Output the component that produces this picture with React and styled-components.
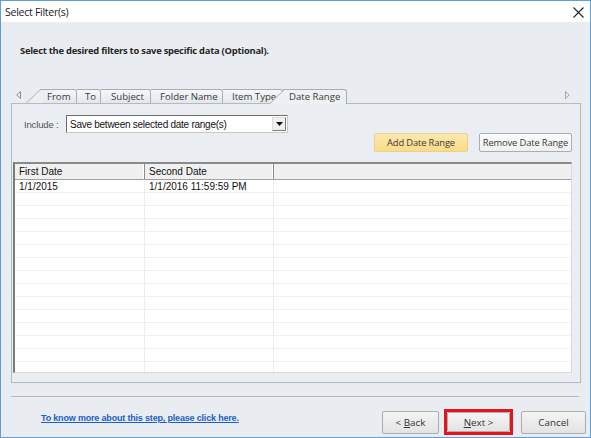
import React from "react";
import styled, { createGlobalStyle, css } from "styled-components";

const GlobalStyle = createGlobalStyle`
  html, body { margin: 0; padding: 0; background: #ffffff; }
  body { font-family: "Open Sans", "Noto Sans", sans-serif; }
  * { box-sizing: border-box; }
`;

const UI = `"Open Sans", "Noto Sans", sans-serif`;
const MS = `"Liberation Sans", Arial, sans-serif`;

const Window = styled.div`
  width: 591px;
  height: 438px;
  border: 1px solid #5d9fd8;
  display: flex;
  flex-direction: column;
  background: #e9edf1;
  overflow: hidden;
`;

const TitleBar = styled.div`
  height: 21px;
  flex: none;
  background: #ffffff;
  display: flex;
  align-items: center;
  justify-content: space-between;
  padding: 0 6px 0 4px;
`;

const Title = styled.div`
  font: 10.6px ${UI};
  color: #1b1b1b;
  letter-spacing: -0.3px;
`;

const CloseButton = styled.div`
  width: 12px;
  height: 12px;
  display: flex;
  align-items: center;
  justify-content: center;
  margin-top: 1px;
`;

const Body = styled.div`
  flex: 1;
  display: flex;
  flex-direction: column;
  padding: 22px 9px 0 10px;
`;

const Intro = styled.div`
  font: bold 9.4px ${UI};
  line-height: 14px;
  color: #262626;
  padding-left: 9px;
  letter-spacing: -0.24px;
`;

const TabStrip = styled.div`
  margin-top: 30px;
  height: 15px;
  display: flex;
  align-items: flex-end;
  position: relative;
  z-index: 2;
`;

const ScrollArrow = styled.div`
  width: 15px;
  height: 15px;
  display: flex;
  align-items: center;
  justify-content: center;
  padding-bottom: 2px;
  ${(p) => p.$right && css`margin-left: auto; margin-right: 6px;`}
`;

const Tabs = styled.div`
  display: flex;
  align-items: flex-end;
  margin-left: 14px;
`;

const Tab = styled.div`
  position: relative;
  width: ${(p) => p.$w}px;
  height: ${(p) => (p.$active ? 15 : 14)}px;
  margin-bottom: ${(p) => (p.$active ? -1 : 0)}px;
  border-top: 1px solid #a6adb6;
  border-right: 1px solid #a6adb6;
  border-top-right-radius: 3px;
  background: ${(p) => (p.$active ? "#eef1f4" : "linear-gradient(#f5f7f9, #e3e7eb)")};
  font: 9.6px ${UI};
  line-height: 13px;
  color: #3a3a3a;
  text-align: left;
  white-space: nowrap;
  padding-left: ${(p) => p.$pl}px;
  z-index: ${(p) => (p.$active ? 2 : 1)};
  ${(p) =>
    p.$slant &&
    css`
      &::before {
        content: "";
        position: absolute;
        top: 0;
        bottom: 0;
        left: -14px;
        width: 15px;
        border-left: 1px solid #a6adb6;
        background: ${p.$active ? "#eef1f4" : "#eceff2"};
        transform: skewX(-46deg);
        transform-origin: bottom left;
        z-index: -1;
      }
    `}
`;

const Panel = styled.div`
  height: 280px;
  border: 1px solid #b4bac2;
  background: #eaeef2;
  display: flex;
  flex-direction: column;
  padding: 11px 8px 9px 1px;
  position: relative;
  z-index: 1;
`;

const IncludeRow = styled.div`
  display: flex;
  align-items: center;
  padding-left: 11px;
  height: 18px;
`;

const Label = styled.span`
  font: 9.6px ${MS};
  color: #555;
  width: 42px;
  letter-spacing: -0.2px;
`;

const Select = styled.div`
  width: 222px;
  height: 18px;
  background: #ffffff;
  border: 1px solid #6e6e6e;
  border-right-color: #c8c8c8;
  border-bottom-color: #c8c8c8;
  display: flex;
  align-items: center;
  justify-content: space-between;
  padding: 0 1px 0 3px;
  font: 10px ${MS};
  letter-spacing: -0.26px;
  color: #111;
`;

const DropButton = styled.div`
  width: 14px;
  height: 14px;
  background: #f0f0f0;
  border: 1px solid #dcdcdc;
  border-right-color: #7a7a7a;
  border-bottom-color: #7a7a7a;
  display: flex;
  align-items: center;
  justify-content: center;
`;

const ActionRow = styled.div`
  display: flex;
  justify-content: flex-end;
  gap: 11px;
`;

const ActionButton = styled.div`
  width: ${(p) => p.$w}px;
  height: 19px;
  border-radius: 2px;
  display: flex;
  align-items: center;
  justify-content: center;
  font: 9.4px ${UI};
  letter-spacing: -0.15px;
  white-space: nowrap;
  color: #3b3b3b;
  ${(p) =>
    p.$hot
      ? css`
          background: linear-gradient(#fce9b0, #f9db88);
          border: 1px solid #ebd08a;
        `
      : css`
          background: linear-gradient(#fbfbfb, #eef0f2);
          border: 1px solid #a9aeb5;
        `}
`;

const Grid = styled.div`
  margin-top: 10px;
  flex: 1;
  background: #ffffff;
  border-top: 2px solid #8a8a8a;
  border-left: 2px solid #7a7a7a;
  border-right: 1px solid #d9d9d9;
  border-bottom: 1px solid #d9d9d9;
  display: flex;
  flex-direction: column;
  overflow: hidden;
`;

const cols = "130px 129px 1fr";

const HeaderRow = styled.div`
  display: grid;
  grid-template-columns: ${cols};
  height: 16px;
  flex: none;
  background: #f0f0f0;
  border-bottom: 1px solid #a0a0a0;
`;

const HeaderCell = styled.div`
  font: 10px ${MS};
  color: #111;
  line-height: 15px;
  padding-left: 4px;
  border-right: 1px solid #8c8c8c;
  box-shadow: inset -1px 0 0 #ffffff;
  &:last-child { border-right: none; box-shadow: none; }
`;

const DataRow = styled.div`
  display: grid;
  grid-template-columns: ${cols};
  height: 13px;
  flex: none;
  border-bottom: 1px solid #f0f0f0;
`;

const DataCell = styled.div`
  font: 10px ${MS};
  color: #111;
  line-height: 13px;
  padding-left: 4px;
  border-right: 1px solid #ececec;
  &:last-child { border-right: none; }
`;

const Separator = styled.div`
  margin-top: 13px;
  height: 1px;
  background: #b3b7bc;
  margin-right: 2px;
`;

const Footer = styled.div`
  display: flex;
  align-items: flex-start;
  justify-content: space-between;
  margin-top: 12px;
  margin-right: -5px;
`;

const HelpLink = styled.a`
  font: bold 9px ${MS};
  line-height: 12px;
  color: #1a5fc7;
  text-decoration: underline;
  margin-left: 30px;
  margin-top: 3px;
  letter-spacing: -0.18px;
  cursor: pointer;
`;

const Buttons = styled.div`
  display: flex;
  align-items: center;
`;

const Highlight = styled.div`
  border: 3px solid #e4141c;
  margin: 0 8px 0 5px;
  padding: 0;
  display: flex;
`;

const DialogButton = styled.div`
  width: ${(p) => p.$w}px;
  height: ${(p) => p.$h || 23}px;
  border: 1px solid #acacac;
  border-radius: 2px;
  background: linear-gradient(#f4f4f4, #e3e3e3);
  display: flex;
  align-items: center;
  justify-content: center;
  font: 9.8px ${UI};
  color: #333;
  u { text-decoration: underline; }
`;

const tabs = [
  { label: "From", w: 37, pl: 7 },
  { label: "To", w: 24, pl: 8 },
  { label: "Subject", w: 50, pl: 10 },
  { label: "Folder Name", w: 72, pl: 9 },
  { label: "Item Type", w: 60, pl: 9 },
  { label: "Date Range", w: 64, pl: 6, active: true },
];

const rows = [["1/1/2015", "1/1/2016 11:59:59 PM", ""]];
const EMPTY_ROWS = 14;

export default function App() {
  return (
    <>
      <GlobalStyle />
      <Window>
        <TitleBar>
          <Title>Select Filter(s)</Title>
          <CloseButton>
            <svg width="11" height="11" viewBox="0 0 11 11">
              <path d="M0.5 0.5 L10.5 10.5 M10.5 0.5 L0.5 10.5" stroke="#222" strokeWidth="1.1" />
            </svg>
          </CloseButton>
        </TitleBar>
        <Body>
          <Intro>Select the desired filters to save specific data (Optional).</Intro>
          <TabStrip>
            <ScrollArrow>
              <svg width="5" height="8" viewBox="0 0 5 8">
                <path d="M4.5 0.5 L0.7 4 L4.5 7.5 Z" fill="none" stroke="#8a8f96" strokeWidth="1" />
              </svg>
            </ScrollArrow>
            <Tabs>
              {tabs.map((t, i) => (
                <Tab key={t.label} $w={t.w} $pl={t.pl} $active={t.active} $slant={i === 0 || t.active}>
                  {t.label}
                </Tab>
              ))}
            </Tabs>
            <ScrollArrow $right>
              <svg width="5" height="8" viewBox="0 0 5 8">
                <path d="M0.5 0.5 L4.3 4 L0.5 7.5 Z" fill="none" stroke="#a0a5ab" strokeWidth="1" />
              </svg>
            </ScrollArrow>
          </TabStrip>
          <Panel>
            <IncludeRow>
              <Label>Include :</Label>
              <Select>
                <span>Save between selected date range(s)</span>
                <DropButton>
                  <svg width="7" height="4" viewBox="0 0 7 4">
                    <path d="M0 0 L7 0 L3.5 4 Z" fill="#111" />
                  </svg>
                </DropButton>
              </Select>
            </IncludeRow>
            <ActionRow>
              <ActionButton $hot $w={94}>Add Date Range</ActionButton>
              <ActionButton $w={93}>Remove Date Range</ActionButton>
            </ActionRow>
            <Grid>
              <HeaderRow>
                <HeaderCell>First Date</HeaderCell>
                <HeaderCell>Second Date</HeaderCell>
                <HeaderCell />
              </HeaderRow>
              {rows.map((r, i) => (
                <DataRow key={i}>
                  {r.map((c, j) => (
                    <DataCell key={j}>{c}</DataCell>
                  ))}
                </DataRow>
              ))}
              {Array.from({ length: EMPTY_ROWS }).map((_, i) => (
                <DataRow key={"e" + i}>
                  <DataCell />
                  <DataCell />
                  <DataCell />
                </DataRow>
              ))}
            </Grid>
          </Panel>
          <Separator />
          <Footer>
            <HelpLink>To know more about this step, please click here.</HelpLink>
            <Buttons>
              <DialogButton $w={57}>
                &lt;&nbsp;<u>B</u>ack
              </DialogButton>
              <Highlight>
                <DialogButton $w={63} $h={20}>
                  <u>N</u>ext &gt;
                </DialogButton>
              </Highlight>
              <DialogButton $w={65}>Cancel</DialogButton>
            </Buttons>
          </Footer>
        </Body>
      </Window>
    </>
  );
}
